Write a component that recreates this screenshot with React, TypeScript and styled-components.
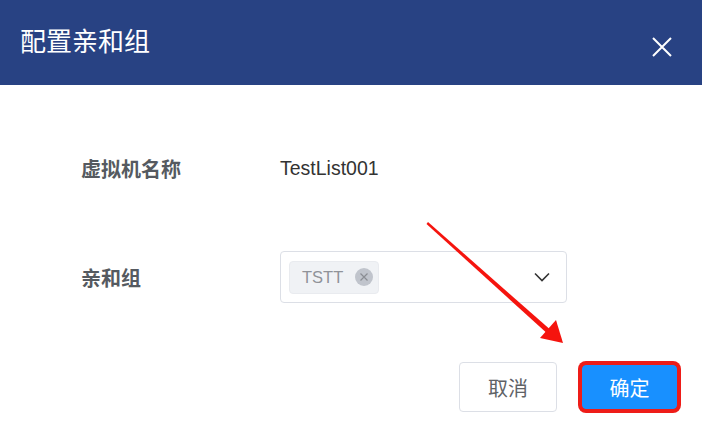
import styled, { createGlobalStyle } from "styled-components";

const Global = createGlobalStyle`
  html, body {
    margin: 0;
    padding: 0;
    background: #fff;
    font-family: "Liberation Sans", "Noto Sans CJK SC", sans-serif;
  }
`

export default function App() {
    return (
        <>
            <Global/>
            <Dialog>
                <Header>
                    <Title>配置亲和组</Title>
                    <CloseBtn>
                        <svg width="20" height="20" viewBox="0 0 20 20">
                            <path d="M1 1 L19 19 M19 1 L1 19" stroke="#fff" strokeWidth="2" fill="none"/>
                        </svg>
                    </CloseBtn>
                </Header>
                <Body>
                    <Row>
                        <Label>虚拟机名称</Label>
                        <Value>TestList001</Value>
                    </Row>
                    <Row>
                        <Label>亲和组</Label>
                        <Select>
                            <Tag>
                                TSTT
                                <TagClose>
                                    <svg width="10" height="10" viewBox="0 0 10 10">
                                        <path d="M1.5 1.5 L8.5 8.5 M8.5 1.5 L1.5 8.5" stroke="#8a8d93" strokeWidth="1.2" fill="none"/>
                                    </svg>
                                </TagClose>
                            </Tag>
                            <Chevron>
                                <svg width="16" height="10" viewBox="0 0 16 10">
                                    <path d="M1 1.5 L8 8.5 L15 1.5" stroke="#333" strokeWidth="1.6" fill="none"/>
                                </svg>
                            </Chevron>
                        </Select>
                    </Row>
                </Body>
                <Footer>
                    <Button>取消</Button>
                    <Button primary>确定</Button>
                </Footer>
                <Arrow width="702" height="437" viewBox="0 0 702 437">
                    <polygon points="426.5,224 428,222 553,332 550,336" fill="#f5140e"/>
                    <polygon points="563,343 540,338 556,320" fill="#f5140e"/>
                </Arrow>
            </Dialog>
        </>
    )
}

const Dialog = styled.div`
  position: relative;
  width: 702px;
  height: 437px;
  background: #fff;
  overflow: hidden;
`

const Header = styled.div`
  height: 85px;
  background: #284283;
  display: flex;
  align-items: center;
  justify-content: space-between;
  padding: 0 30px 0 20px;
  box-sizing: border-box;
`

const Title = styled.div`
  color: #fff;
  font-size: 26px;
  font-family: "Noto Sans CJK SC", sans-serif;
  margin-top: -6px;
`

const CloseBtn = styled.div`
  display: flex;
  margin-top: 8px;
`

const Body = styled.div`
  padding: 57px 0 0 81px;
  display: flex;
  flex-direction: column;
  gap: 57px;
`

const Row = styled.div`
  display: flex;
  align-items: center;
  height: 52px;
`

const Label = styled.div`
  width: 199px;
  font-size: 20px;
  font-weight: bold;
  color: #555a60;
  font-family: "Noto Sans CJK SC", sans-serif;
`

const Value = styled.div`
  font-size: 19.5px;
  color: #333;
`

const Select = styled.div`
  width: 287px;
  height: 52px;
  box-sizing: border-box;
  border: 1px solid #dcdfe6;
  border-radius: 4px;
  display: flex;
  align-items: center;
  justify-content: space-between;
  padding: 0 16px 0 8px;
`

const Tag = styled.div`
  height: 33px;
  width: 90px;
  box-sizing: border-box;
  background: #f0f2f5;
  border: 1px solid #e9ebef;
  border-radius: 4px;
  display: flex;
  align-items: center;
  gap: 12px;
  padding-left: 12px;
  font-size: 16.5px;
  color: #909399;
`

const TagClose = styled.div`
  width: 18px;
  height: 18px;
  border-radius: 50%;
  background: #c0c4cc;
  display: flex;
  align-items: center;
  justify-content: center;
`

const Chevron = styled.div`
  display: flex;
`

const Footer = styled.div`
  display: flex;
  justify-content: flex-end;
  align-items: center;
  gap: 25px;
  padding: 59px 25px 0 0;
`

const Button = styled.div<{ primary?: boolean }>`
  box-sizing: border-box;
  display: flex;
  align-items: center;
  justify-content: center;
  font-size: 20px;
  font-family: "Noto Sans CJK SC", sans-serif;
  border-radius: 4px;
  width: ${p => p.primary ? "95px" : "98px"};
  height: ${p => p.primary ? "44px" : "50px"};
  background: ${p => p.primary ? "#1890ff" : "#fff"};
  color: ${p => p.primary ? "#fff" : "#606266"};
  border: 1px solid ${p => p.primary ? "#1890ff" : "#dcdfe6"};
  box-shadow: ${p => p.primary ? "0 0 0 4px #ee1c18" : "none"};
`

const Arrow = styled.svg`
  position: absolute;
  left: 0;
  top: 0;
  pointer-events: none;
`
